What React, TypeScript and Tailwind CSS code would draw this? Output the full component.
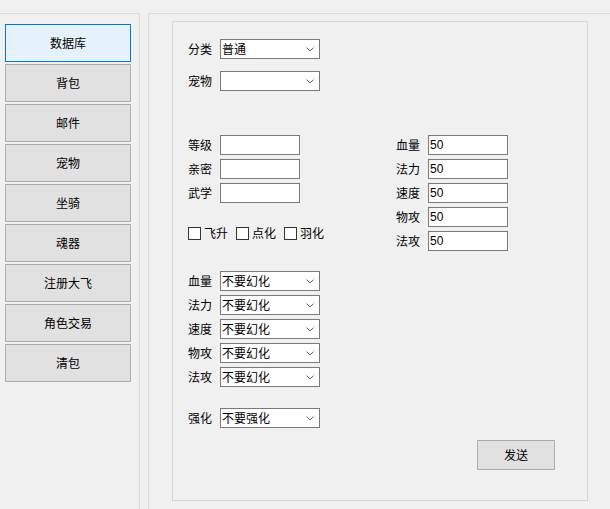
const navItems = ["数据库", "背包", "邮件", "宠物", "坐骑", "魂器", "注册大飞", "角色交易", "清包"];
const statLabels = ["血量", "法力", "速度", "物攻", "法攻"];

function Chevron() {
  return (
    <svg width="8" height="5" viewBox="0 0 8 5" className="shrink-0">
      <path d="M0.5 0.5 L4 4 L7.5 0.5" fill="none" stroke="#606060" strokeWidth="1" />
    </svg>
  );
}

function Select({ value = "" }: { value?: string }) {
  return (
    <div className="flex h-[20px] w-[100px] items-center justify-between border border-[#7a7a7a] bg-white pl-[1px] pr-[5px]">
      <span className="leading-none">{value}</span>
      <Chevron />
    </div>
  );
}

function Field({ label, children }: { label: string; children: React.ReactNode }) {
  return (
    <div className="flex h-[20px] items-center">
      <span className="w-[32px] leading-none">{label}</span>
      {children}
    </div>
  );
}

function TextBox({ value = "" }: { value?: string }) {
  return (
    <div className="flex h-[20px] w-[80px] items-center border border-[#7a7a7a] bg-white pl-[1px] font-['Liberation_Sans',sans-serif] text-[12px] leading-none">
      {value}
    </div>
  );
}

function Check({ label }: { label: string }) {
  return (
    <div className="flex items-center gap-[3px]">
      <span className="h-[13px] w-[13px] border border-[#333333] bg-white" />
      <span className="leading-none">{label}</span>
    </div>
  );
}

export default function App() {
  return (
    <div className="flex h-[509px] w-[610px] overflow-hidden bg-[#f0f0f0] pt-[13px] font-['Noto_Sans_CJK_SC',sans-serif] text-[12px] text-black">
      {/* Side menu */}
      <div className="flex w-[140px] shrink-0 flex-col gap-[2px] border-r border-t border-[#dadada] pl-[5px] pt-[10px]">
        {navItems.map((item, i) => (
          <button
            key={item}
            className={
              i === 0
                ? "h-[38px] w-[126px] border border-[#0078d7] bg-[#e5f1fb] leading-none"
                : "h-[38px] w-[126px] border border-[#adadad] bg-[#e1e1e1] leading-none"
            }
          >
            {item}
          </button>
        ))}
      </div>

      {/* Main panel */}
      <div className="ml-[8px] flex-1 border-l border-t border-[#dadada] pl-[23px] pt-[7px]">
        <div className="flex h-[480px] w-[416px] flex-col border border-[#d6d6d6] pl-[15px] pt-[17px]">
          <Field label="分类">
            <Select value="普通" />
          </Field>
          <div className="mt-[12px]">
            <Field label="宠物">
              <Select />
            </Field>
          </div>

          <div className="mt-[44px] flex">
            <div className="flex w-[208px] flex-col gap-[4px]">
              <Field label="等级">
                <TextBox />
              </Field>
              <Field label="亲密">
                <TextBox />
              </Field>
              <Field label="武学">
                <TextBox />
              </Field>
              <div className="mt-[16px] flex h-[20px] items-center gap-[8px]">
                <Check label="飞升" />
                <Check label="点化" />
                <Check label="羽化" />
              </div>
            </div>
            <div className="flex flex-col gap-[4px]">
              {statLabels.map((s) => (
                <Field key={s} label={s}>
                  <TextBox value="50" />
                </Field>
              ))}
            </div>
          </div>

          <div className="mt-[20px] flex flex-col gap-[4px]">
            {statLabels.map((s) => (
              <Field key={s} label={s}>
                <Select value="不要幻化" />
              </Field>
            ))}
          </div>

          <div className="mt-[21px]">
            <Field label="强化">
              <Select value="不要强化" />
            </Field>
          </div>

          <button className="ml-[289px] mt-[12px] h-[30px] w-[78px] border border-[#adadad] bg-[#e1e1e1] leading-none">
            发送
          </button>
        </div>
      </div>
    </div>
  );
}
